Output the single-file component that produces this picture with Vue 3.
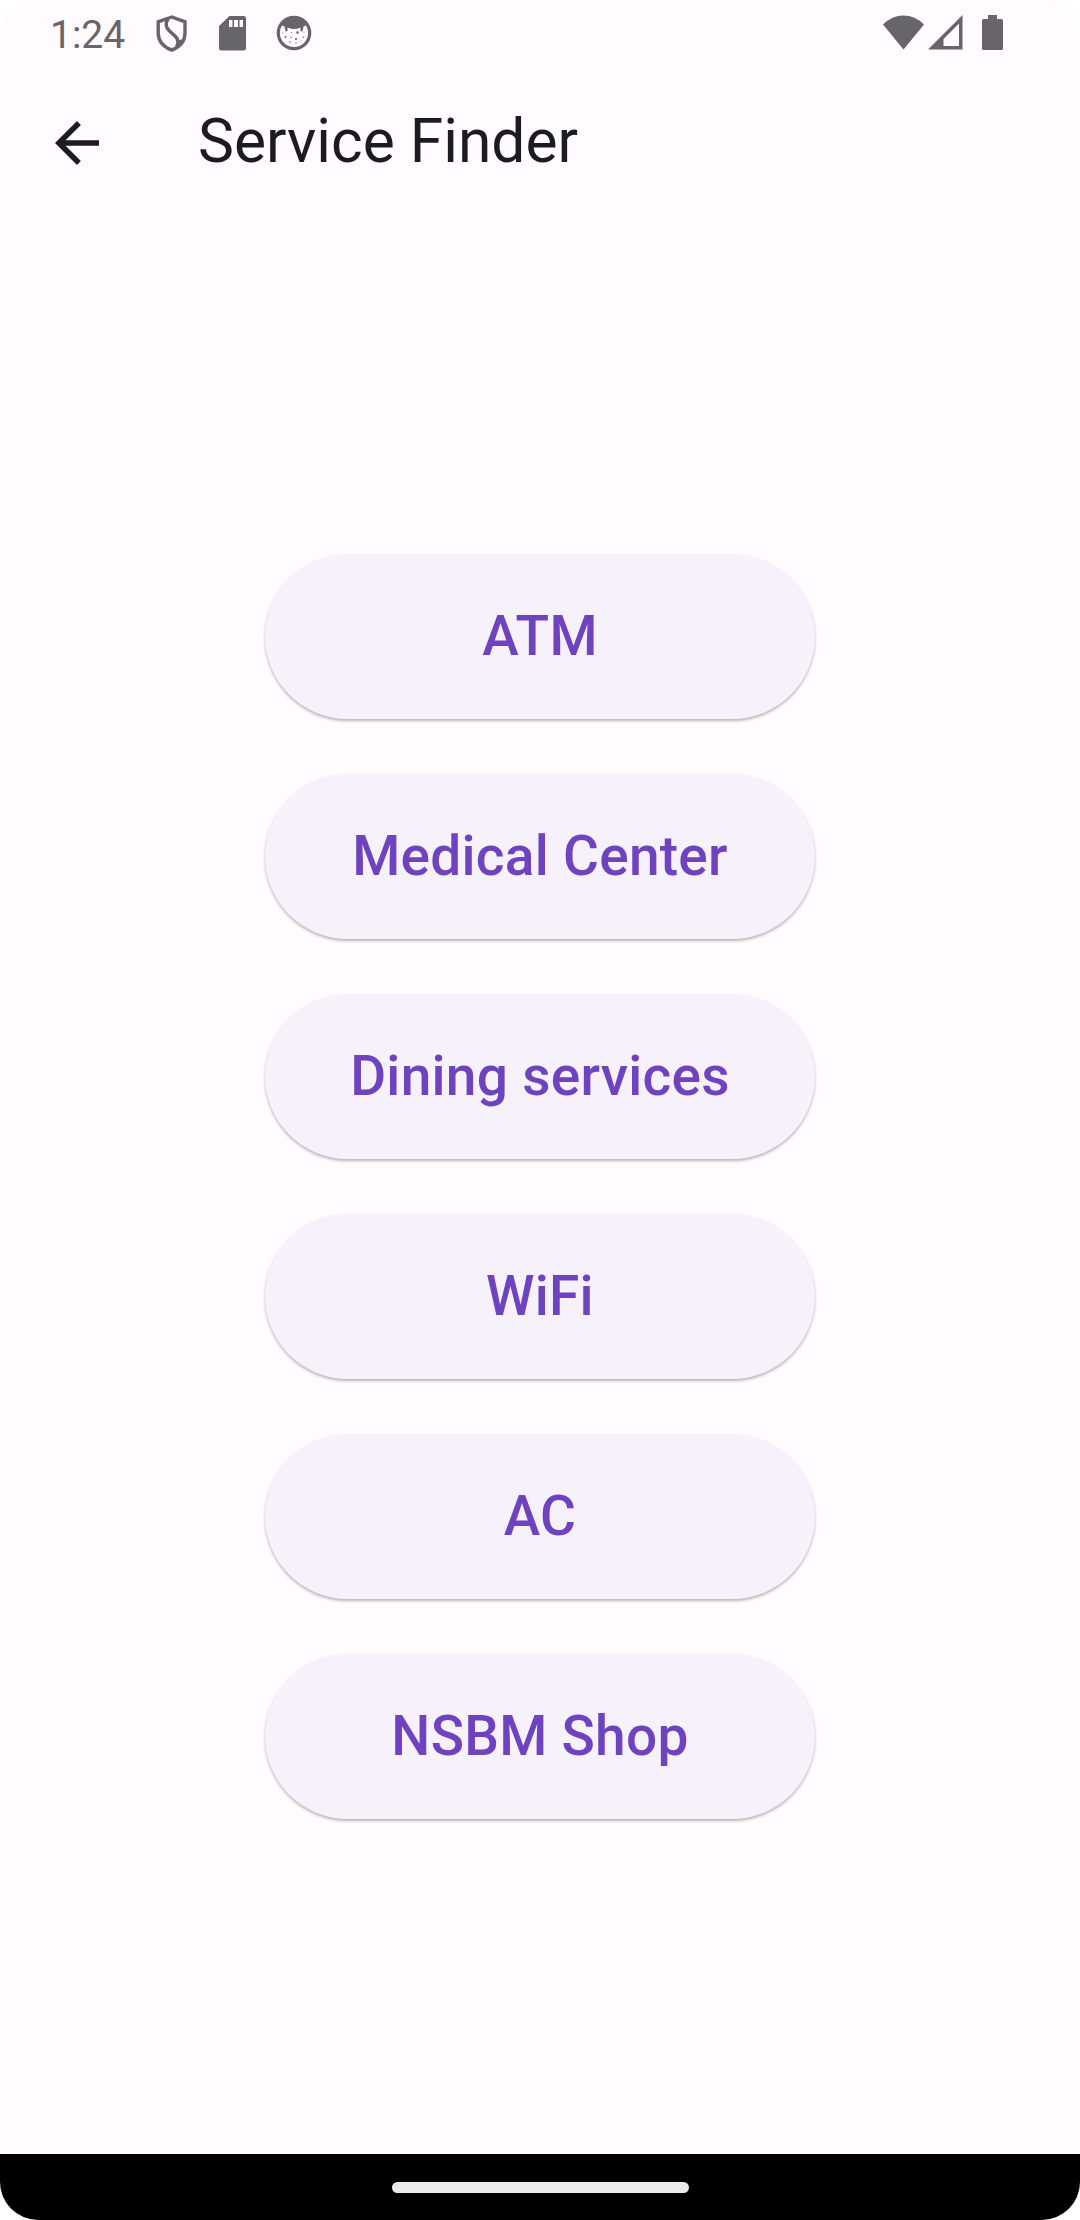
<script setup>
const services = ['ATM', 'Medical Center', 'Dining services', 'WiFi', 'AC', 'NSBM Shop']
</script>

<template>
  <div class="screen">
    <header class="status">
      <span class="time">1:24</span>
      <svg class="shield" width="32" height="38" viewBox="0 0 32 38" fill="none" stroke="#676569" stroke-width="3.4">
        <path d="M15.700 2 2.200 6.800V18c0 8 5.500 14 13.500 17.200C23.700 32 29 26 29 18V6.800Z" />
        <path d="M12 4C9.500 8 9.500 12 13 15.500L19.500 21.500C23 25 22.500 28 20.500 32" />
        <path fill="#676569" stroke="none" d="M22.500 25 26.500 24.500 25 29 20 33Z" />
      </svg>
      <svg class="sd" width="28" height="35" viewBox="0 0 28 35" fill="#676569">
        <path fill-rule="evenodd" d="M10.500 0H24.500Q27 0 27 2.500V32Q27 34.500 24.500 34.500H2.500Q0 34.500 0 32V10ZM10 4V11H13.500V4ZM15 4V11H19V4ZM20.500 4V11H24V4Z" />
      </svg>
      <svg class="face" width="36" height="36" viewBox="0 0 36 36">
        <circle cx="18" cy="18" r="15.700" fill="none" stroke="#676569" stroke-width="3.200" />
        <path fill="#676569" d="M5 10Q9 2.500 18 2.500T31 10L27.500 11.500 26.500 16.500 24.500 16 24.500 12.500Q21 14 18 14T11.500 12.500L11.500 16 9.500 16.500 8.500 11.500Z" />
        <g fill="#676569">
          <circle cx="15.500" cy="17.500" r=".6" /><circle cx="21.500" cy="17.500" r="1.200" />
          <circle cx="9.500" cy="22" r="1" /><circle cx="15" cy="22.500" r=".7" />
          <circle cx="20" cy="24" r="1.100" /><circle cx="27.500" cy="22" r=".8" />
          <circle cx="14" cy="27" r=".8" /><circle cx="20" cy="28" r=".7" /><circle cx="25" cy="26" r=".6" />
          <circle cx="7" cy="18" r=".6" /><circle cx="28" cy="17" r=".5" />
        </g>
      </svg>
      <span class="grow"></span>
      <svg class="wifi" width="42" height="36" viewBox="0 0 42 36" fill="#676569">
        <path d="M0 9.500Q9 .5 20.500 .5T41 9.500L20.500 34.500Z" />
      </svg>
      <svg class="signal" width="35" height="35" viewBox="0 0 35 35" fill="#676569">
        <path fill-rule="evenodd" d="M34.500 0V34.500H0ZM31 8.500 15.500 24V31H31Z" />
      </svg>
      <svg class="battery" width="21" height="35" viewBox="0 0 21 35" fill="#676569">
        <path d="M6 0H15V4H19.500Q21 4 21 5.500V33.500Q21 35 19.500 35H1.500Q0 35 0 33.500V5.500Q0 4 1.500 4H6Z" />
      </svg>
    </header>

    <div class="appbar">
      <svg class="back" width="66" height="66" viewBox="0 0 24 24" fill="#1c1b1f">
        <path d="M20 11H7.830l5.590-5.590L12 4l-8 8 8 8 1.410-1.410L7.830 13H20v-2z" />
      </svg>
      <h1>Service Finder</h1>
    </div>

    <main>
      <button v-for="name in services" :key="name">{{ name }}</button>
    </main>

    <footer><span class="handle"></span></footer>
  </div>
</template>

<style>
body { margin: 0; background: #fff; }
</style>

<style scoped>
.screen {
  width: 1080px;
  height: 2220px;
  display: flex;
  flex-direction: column;
  background: #fffbff;
  border-radius: 38px;
  overflow: hidden;
  font-family: Roboto, sans-serif;
}
.status {
  height: 66px;
  box-sizing: border-box;
  padding: 15px 77px 0 50px;
  display: flex;
  align-items: flex-start;
  color: #676569;
}
.time { width: 106px; font-size: 39px; line-height: 40px; }
.sd { margin: 1px 0 0 31px; }
.face { margin: 0 0 0 29px; }
.grow { flex: 1; }
.signal { margin-left: 3px; }
.battery { margin-left: 19px; }
.appbar {
  height: 154px;
  display: flex;
  align-items: center;
}
.back { margin-left: 44px; }
h1 {
  margin: -4px 0 0 88px;
  color: #1c1b1f;
  font-size: 60.5px;
  line-height: 77px;
  font-weight: 400;
}
main {
  flex: 1;
  display: flex;
  flex-direction: column;
  align-items: center;
  gap: 55px;
  padding-top: 334px;
}
button {
  width: 550px;
  height: 165px;
  padding: 0 0 2px;
  border: 0;
  border-radius: 83px;
  background: #f6f1fb;
  box-shadow: 0 2px 3px rgba(0, 0, 0, .28);
  color: #6f43c0;
  font: 500 55px/64px Roboto, sans-serif;
  letter-spacing: .275px;
}
footer {
  height: 66px;
  background: #000;
  display: flex;
  align-items: center;
  justify-content: center;
}
.handle { width: 297px; height: 11px; border-radius: 6px; background: #ebebeb; }
</style>
